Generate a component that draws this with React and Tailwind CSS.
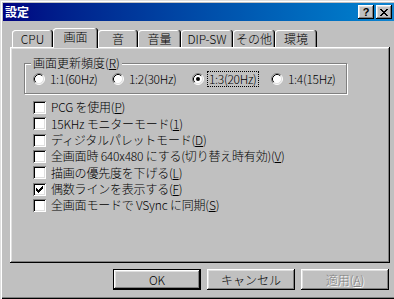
const raised =
  "shadow-[inset_-1px_-1px_0_#000,inset_1px_1px_0_#fff,inset_-2px_-2px_0_#808080,inset_2px_2px_0_#dfdfdf]";

const tabs = [
  { label: "CPU", w: "w-[41px]" },
  { label: "画面", w: "w-[45px]", active: true },
  { label: "音", w: "w-[40px]" },
  { label: "音量", w: "w-[43px]" },
  { label: "DIP-SW", w: "w-[52px]" },
  { label: "その他", w: "w-[42px]" },
  { label: "環境", w: "w-[42px]" },
];

const rates = [
  { pre: "1:1(60Hz)", w: "w-[79px]" },
  { pre: "1:2(30Hz)", w: "w-[80px]" },
  { pre: "1:3(20Hz)", w: "w-[79px]", checked: true },
  { pre: "1:4(15Hz)", w: "w-[70px]" },
];

const options = [
  { text: "PCG を使用(", key: "P", rest: ")", h: "h-[16px]" },
  { text: "15KHz モニターモード(", key: "1", rest: ")", h: "h-[17px]" },
  { text: "ディジタルパレットモード(", key: "D", rest: ")", h: "h-[16px]" },
  { text: "全画面時 640x480 にする(切り替え時有効)(", key: "V", rest: ")", h: "h-[16px]" },
  { text: "描画の優先度を下げる(", key: "L", rest: ")", h: "h-[17px]" },
  { text: "偶数ラインを表示する(", key: "F", rest: ")", h: "h-[16px]", checked: true },
  { text: "全画面モードで VSync に同期(", key: "S", rest: ")", h: "h-[16px]" },
];

const Radio = ({ checked }) => (
  <svg width="12" height="12" viewBox="0 0 12 12" className="shrink-0">
    <circle cx="6" cy="6" r="5" fill="#fff" />
    <path d="M2.11 9.89 A5.5 5.5 0 0 1 9.89 2.11" fill="none" stroke="#808080" />
    <path d="M9.89 2.11 A5.5 5.5 0 0 1 2.11 9.89" fill="none" stroke="#fff" />
    <path d="M2.82 9.18 A4.5 4.5 0 0 1 9.18 2.82" fill="none" stroke="#000" />
    <path d="M9.18 2.82 A4.5 4.5 0 0 1 2.82 9.18" fill="none" stroke="#dfdfdf" />
    {checked && <circle cx="6" cy="6" r="2" fill="#000" />}
  </svg>
);

const Check = ({ checked }) => (
  <span className="w-[13px] h-[13px] shrink-0 bg-white flex items-center justify-center shadow-[inset_1px_1px_0_#808080,inset_-1px_-1px_0_#fff,inset_2px_2px_0_#000,inset_-2px_-2px_0_#dfdfdf]">
    {checked && (
      <svg width="7" height="7" viewBox="0 0 7 7">
        <path d="M0 2h1v1h1v1h1V3h1V2h1V1h1V0h1v3H6v1H5v1H4v1H3v1H2V6H1V5H0z" fill="#000" />
      </svg>
    )}
  </span>
);

const Button = ({ children, isDefault, disabled }) => (
  <div
    className={`w-[88px] h-[21px] flex items-center justify-center ${
      isDefault
        ? "border border-black shadow-[inset_-1px_-1px_0_#000,inset_1px_1px_0_#fff,inset_-2px_-2px_0_#808080,inset_2px_2px_0_#dfdfdf]"
        : raised
    } ${disabled ? "text-[#808080] [text-shadow:1px_1px_0_#fff]" : "text-black"}`}
  >
    {children}
  </div>
);

export default function App() {
  return (
    <div className="w-[394px] h-[299px] bg-[#c0c0c0] flex flex-col pt-[3px] pl-[3px] overflow-hidden font-['Noto_Sans_CJK_JP','Noto_Sans',sans-serif] font-light text-[12px] leading-none text-black shadow-[inset_1px_1px_0_#dfdfdf,inset_2px_2px_0_#fff,inset_0_-1px_0_#000,inset_0_-2px_0_#808080]">
      {/* title bar */}
      <div className="h-[18px] flex items-center justify-between bg-gradient-to-r from-[#000080] to-[#1084d0] pl-[2px]">
        <span className="text-white font-bold text-[12px]">設定</span>
        <div className="flex gap-[2px] pr-[2px]">
          <div className={`w-[16px] h-[14px] bg-[#c0c0c0] flex items-center justify-center font-bold text-[11px] font-['Liberation_Sans',sans-serif] ${raised}`}>
            ?
          </div>
          <div className={`w-[16px] h-[14px] bg-[#c0c0c0] flex items-center justify-center ${raised}`}>
            <svg width="8" height="7" viewBox="0 0 8 7">
              <path d="M0 0h2v1h1v1h2V1h1V0h2v1H7v1H6v1H5v1h1v1h1v1h1v1H6V6H5V5H3v1H2v1H0V6h1V5h1V4h1V3H2V2H1V1H0z" fill="#000" />
            </svg>
          </div>
        </div>
      </div>

      <div className="flex flex-col pl-[7px] pr-[4px] mt-[7px]">
        {/* tabs */}
        <div className="flex items-end h-[19px] ml-[2px]">
          {tabs.map((t) => (
            <div
              key={t.label}
              className={`${t.w} flex items-center justify-center bg-[#c0c0c0] rounded-t-[3px] shadow-[inset_-1px_0_0_#000,inset_1px_1px_0_#fff,inset_-2px_0_0_#808080] ${
                t.active ? "h-[20px] -mb-px relative z-10 pb-[2px]" : "h-[17px] pt-[1px]"
              }`}
            >
              {t.label}
            </div>
          ))}
        </div>

        {/* panel */}
        <div className={`h-[216px] flex flex-col pl-[14px] ${raised}`}>
          <div className="relative mt-[16px] w-[323px] h-[31px] border border-[#808080] shadow-[1px_1px_0_#fff,inset_1px_1px_0_#fff] flex items-center pl-[8px] pt-[1px]">
            <span className="absolute -top-[7px] left-[6px] px-[2px] bg-[#c0c0c0]">
              画面更新頻度(<u className="underline-offset-[1px]">R</u>)
            </span>
            {rates.map((r) => (
              <div key={r.pre} className={`${r.w} flex items-center gap-[3px]`}>
                <Radio checked={r.checked} />
                <span
                  className={`px-[1px] py-[1px] border border-dotted tracking-[-0.3px] ${
                    r.checked ? "border-black" : "border-transparent"
                  }`}
                >
                  {r.pre}
                </span>
              </div>
            ))}
          </div>

          <div className="flex flex-col mt-[5px] pl-[9px]">
            {options.map((o) => (
              <div key={o.text} className={`${o.h} flex items-center gap-[5px]`}>
                <Check checked={o.checked} />
                <span className="tracking-[-0.2px]">
                  {o.text}
                  <u className="underline-offset-[1px]">{o.key}</u>
                  {o.rest}
                </span>
              </div>
            ))}
          </div>
        </div>

        {/* buttons */}
        <div className="flex justify-end gap-[6px] mt-[6px] pr-[1px]">
          <Button isDefault>OK</Button>
          <Button>キャンセル</Button>
          <Button disabled>
            <span>
              適用(<u className="underline-offset-[1px]">A</u>)
            </span>
          </Button>
        </div>
      </div>
    </div>
  );
}
